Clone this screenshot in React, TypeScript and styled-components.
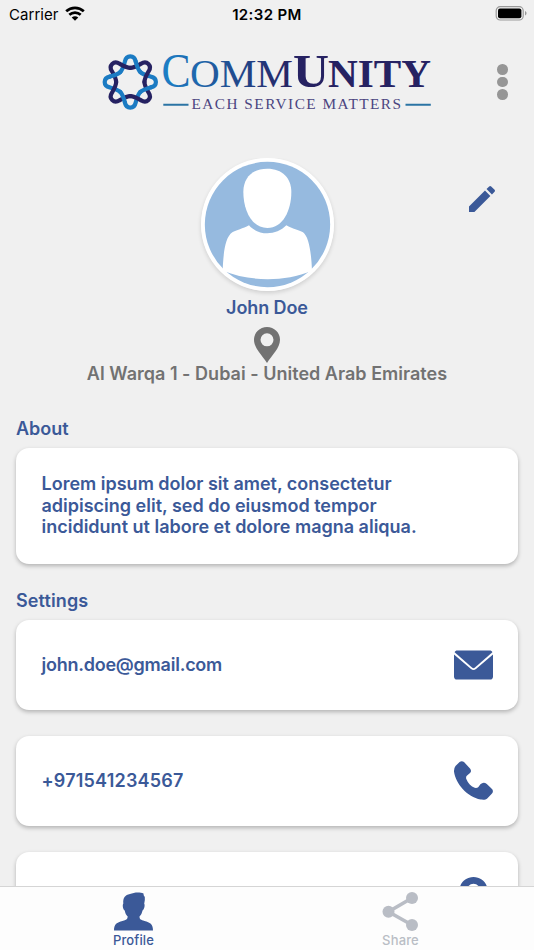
import React from 'react';
import styled, { createGlobalStyle } from 'styled-components';

const BLUE = '#3b5998';
const GREY = '#727272';

const GlobalStyle = createGlobalStyle`
  * { box-sizing: border-box; }
  body { margin: 0; background: #f0f0f0; font-family: Inter, "Liberation Sans", sans-serif; }
  svg { display: block; flex: none; overflow: visible; }
`;

const Screen = styled.div`
  display: flex;
  flex-direction: column;
  width: 534px;
  height: 950px;
  overflow: hidden;
  background: #f0f0f0;
`;

const StatusBar = styled.header`
  display: grid;
  grid-template-columns: 1fr auto 1fr;
  align-items: center;
  flex: none;
  height: 28px;
  padding: 0 7px 0 9px;
  color: #000;
  font-size: 15px;
`;
const Carrier = styled.div`
  display: flex;
  align-items: center;
  gap: 6px;
  letter-spacing: 0.05px;
`;
const Clock = styled.div`
  margin-right: 2px;
  font-weight: 600;
  letter-spacing: 0.38px;
`;
const Battery = styled.div`
  display: flex;
  justify-content: flex-end;
`;

const Brand = styled.div`
  display: flex;
  justify-content: space-between;
  flex: none;
  height: 130px;
  padding: 22px 26px 0 100px;
`;
const MenuButton = styled.button`
  display: flex;
  flex-direction: column;
  gap: 2px;
  height: 36px;
  margin-top: 14px;
  padding: 0;
  border: 0;
  background: none;
`;
const Dot = styled.span`
  width: 10.6px;
  height: 10.6px;
  border-radius: 50%;
  background: #969696;
`;

const Content = styled.main`
  flex: 1;
  min-height: 0;
  overflow: hidden;
`;
const ProfileHead = styled.section`
  display: grid;
  grid-template-columns: 1fr 133px 1fr;
  align-items: start;
`;
const Avatar = styled.div`
  grid-column: 2;
  height: 133px;
  border-radius: 50%;
  box-shadow: 0 2px 4px rgba(0, 0, 0, 0.14);
`;
const EditButton = styled.button`
  justify-self: end;
  margin: 28px 39px 0 0;
  padding: 0;
  border: 0;
  background: none;
`;
const Identity = styled.section`
  display: flex;
  flex-direction: column;
  align-items: center;
  padding-top: 5.500px;
`;
const Label = styled.div<{ $color?: string; $spacing?: number }>`
  color: ${p => p.$color ?? BLUE};
  font-size: 18px;
  font-weight: 600;
  line-height: 22px;
  letter-spacing: ${p => p.$spacing ?? 0}px;
  white-space: nowrap;
`;
const PinWrap = styled.div`
  margin: 8px 0 0;
`;
const Section = styled.section<{ $top: number }>`
  padding: ${p => p.$top}px 16px 0;
`;
const Card = styled.article<{ $height: number }>`
  display: flex;
  align-items: center;
  justify-content: space-between;
  height: ${p => p.$height}px;
  padding: 0 25px 0 25.5px;
  border-radius: 13px;
  background: #fff;
  box-shadow: 0 2px 4px rgba(0, 0, 0, 0.26);
`;
const Stack = styled.div`
  display: flex;
  flex-direction: column;
  gap: 26px;
  margin-top: 8px;
`;
const Paragraph = styled.p`
  margin: 0;
  color: ${BLUE};
  font-size: 18px;
  font-weight: 600;
  line-height: 21.5px;
`;
const Line = styled.span`
  display: block;
  white-space: nowrap;
`;

const TabBar = styled.nav`
  display: grid;
  grid-template-columns: 1fr 1fr;
  flex: none;
  height: 64px;
  border-top: 1px solid #d5d5d5;
  background: #fdfdfd;
`;
const Tab = styled.button<{ $active?: boolean }>`
  display: flex;
  flex-direction: column;
  align-items: center;
  gap: 1px;
  padding: 4.5px 0 0;
  border: 0;
  background: none;
  color: ${p => (p.$active ? BLUE : '#b9bdc5')};
  font: 500 13px/16px Inter, sans-serif;
  letter-spacing: 0.15px;
`;

const WifiIcon = () => (
  <svg width="20" height="15" viewBox="0 0 20 15">
    <g fill="none" stroke="#000" strokeWidth="2.700">
      <path d="M1.200 4.300C6.200-.4 13.800-.4 18.800 4.300" />
      <path d="M4.300 7.800c3.300-3 8.100-3 11.400 0" />
    </g>
    <path d="M6.700 10.500c2-1.700 4.600-1.700 6.600 0L10 13.800z" />
  </svg>
);

const BatteryIcon = () => (
  <svg width="32" height="15" viewBox="0 0 32 15">
    <rect x="1.200" y="-.3" width="27" height="13.300" rx="4" fill="none" stroke="#999" strokeWidth="1.200" />
    <rect x="3" y="1.500" width="23.400" height="9.700" rx="2" />
    <path d="M30 4.100c2 .8 2 3.700 0 4.500z" fill="#999" />
  </svg>
);

const LOBE_LEFT = 'M-10-10C-7.500-12.500-6.600-16-5.400-20.500C-4-27.300 4-27.300 5.400-20.500';
const LOBE_RIGHT = 'M5.400-20.500C6.600-16 7.500-12.500 10-10';

const Logo = () => (
  <svg width="334" height="64" viewBox="100 50 334 64" fontFamily='"Liberation Serif", serif'>
    <defs>
      <linearGradient id="word" gradientUnits="userSpaceOnUse" x1="163" y1="0" x2="292" y2="0">
        <stop offset="0" stopColor="#1c7fc6" />
        <stop offset="1" stopColor="#262262" />
      </linearGradient>
    </defs>
    <g transform="translate(130.300 82)" fill="none" strokeWidth="4.200" strokeLinecap="round">
      {[0, 90, 180, 270].map(a => (
        <path key={a} d={LOBE_LEFT} stroke="#1b7bc3" transform={`rotate(${a})`} />
      ))}
      {[45, 135, 225, 315].map(a => (
        <path key={a} d={`${LOBE_LEFT}${LOBE_RIGHT}`} stroke="#262262" transform={`rotate(${a})`} />
      ))}
      {[0, 90, 180, 270].map(a => (
        <path key={a} d={LOBE_RIGHT} stroke="#1b7bc3" transform={`rotate(${a})`} />
      ))}
    </g>
    <g fill="url(#word)">
      <text x="161.500" y="86.500" fontSize="48" textLength="29" lengthAdjust="spacingAndGlyphs">C</text>
      <text x="190" y="86.500" fontSize="41" textLength="103" lengthAdjust="spacingAndGlyphs">OMM</text>
    </g>
    <g fill="#262262" fontWeight="700">
      <text x="293" y="86.500" fontSize="47" textLength="36" lengthAdjust="spacingAndGlyphs">U</text>
      <text x="328" y="86.500" fontSize="40.500" textLength="103" lengthAdjust="spacingAndGlyphs">NITY</text>
    </g>
    <text x="191.500" y="109.300" fontSize="15.500" textLength="211" lengthAdjust="spacingAndGlyphs" letterSpacing="1.500" fill="#4a4480">EACH SERVICE MATTERS</text>
    <path d="M163.300 104.800H188.500M405.500 104.800H430.800" stroke="#2b74a4" strokeWidth="2" />
  </svg>
);

const Portrait = () => (
  <svg width="133" height="133" viewBox="32 24 399 399">
    <circle cx="231.500" cy="223.500" r="199.500" fill="#fff" />
    <circle cx="231.500" cy="223.500" r="188" fill="#96badf" />
    <path fill="#fff" d="M231 56C276 56 303 84 303 126C303 182 277 234 231 234S159 182 159 126C159 84 186 56 231 56Z" />
    <path fill="#fff" d="M97 362C99 310 104 262 126 247C138 240 158 236 176 226C203 258 258 258 288 226C306 237 326 240 338 247C356 260 363 310 365 362C280 396 185 396 97 362Z" />
  </svg>
);

const PencilIcon = () => (
  <svg width="26" height="26" viewBox="3 3 18 18" fill={BLUE}>
    <path d="M3 17.250V21h3.750L17.810 9.940l-3.750-3.750L3 17.250zM20.710 7.040c.39-.39.39-1.020 0-1.410l-2.340-2.340a.996.996 0 0 0-1.410 0l-1.830 1.830 3.750 3.750 1.830-1.830z" />
  </svg>
);

const PinIcon = ({ color, width, height }: { color: string; width: number; height: number }) => (
  <svg width={width} height={height} viewBox="0 0 26 36" fill={color}>
    <path fillRule="evenodd" d="M13 0C5.800 0 0 5.600 0 12.700C0 21 8 28 13 36C18 28 26 21 26 12.700C26 5.600 20.200 0 13 0ZM13 6.300a6.500 6.500 0 1 1 0 13a6.500 6.500 0 0 1 0-13Z" />
  </svg>
);

const MailIcon = () => (
  <svg width="39" height="30" viewBox="0 0 39 30" fill={BLUE}>
    <path d="M.6 2.200C1 1 2 .4 3.300 .4H35.700C37 .4 38 1 38.400 2.200L21 17.500Q19.500 18.800 18 17.500Z" />
    <path d="M0 4.500L17 19Q19.500 21 22 19L39 4.500V26.400Q39 29.500 36 29.500H3Q0 29.500 0 26.400Z" />
  </svg>
);

const PhoneIcon = () => (
  <svg width="39" height="39" viewBox="0 0 39 39" fill={BLUE}>
    <path d="M5.600 1Q7.700-.7 10 1L16 7.500Q18 10 16 12L12.800 14.800Q11.700 16 12.300 18C14 22.500 17 25.300 20.700 26.800Q23 27.300 24.400 26L26.400 23.300Q29.500 20.200 32.800 23L38 28Q39.800 30.200 38 32.500L33.500 37.200C31.800 38.800 29.500 38.800 26.700 38.500C13 36 1.500 22.500 0 10.500Q-.1 7 1.500 5Z" />
  </svg>
);

const PersonIcon = () => (
  <svg width="39" height="39" viewBox="0 0 39 39" fill="currentColor">
    <path d="M9.300 11.500C8.800 6 11 2.800 16 2C20 .2 26-.2 29.500 1.500Q29.200 3 30.800 5Q31.200 8 30.200 11.800C31.200 13 30.300 17.500 28.500 18.500C28 21 27 23 25.500 24.500C25.500 27.300 27 28 30.500 28.900C36 30.300 39 31.800 39 38.500H0C0 31.800 3 30.300 8.500 28.900C12 28 13.700 27.300 13.700 24.500C12 23 11.200 21 10.700 18.500C9 17.500 8.200 13 9.300 11.500Z" />
  </svg>
);

const ShareIcon = () => (
  <svg width="36" height="39" viewBox="0 0 36 39" fill="currentColor">
    <path d="M29 6L5.500 19.700L29 33" fill="none" stroke="currentColor" strokeWidth="3.600" />
    <circle cx="29" cy="6" r="6" />
    <circle cx="5.500" cy="19.700" r="6" />
    <circle cx="29" cy="33" r="6" />
  </svg>
);

export default function App() {
  return (
    <>
      <GlobalStyle />
      <Screen>
        <StatusBar>
          <Carrier>Carrier <WifiIcon /></Carrier>
          <Clock>12:32 PM</Clock>
          <Battery><BatteryIcon /></Battery>
        </StatusBar>
        <Brand>
          <Logo />
          <MenuButton aria-label="Menu"><Dot /><Dot /><Dot /></MenuButton>
        </Brand>
        <Content>
          <ProfileHead>
            <Avatar><Portrait /></Avatar>
            <EditButton aria-label="Edit profile"><PencilIcon /></EditButton>
          </ProfileHead>
          <Identity>
            <Label $spacing={-0.1}>John Doe</Label>
            <PinWrap><PinIcon color={GREY} width={26} height={36} /></PinWrap>
            <Label $color={GREY} $spacing={0.02}>Al Warqa 1 - Dubai - United Arab Emirates</Label>
          </Identity>
          <Section $top={33}>
            <Label>About</Label>
            <Stack>
              <Card $height={116}>
                <Paragraph>
                  <Line>Lorem ipsum dolor sit amet, consectetur</Line>
                  <Line>adipiscing elit, sed do eiusmod tempor</Line>
                  <Line>incididunt ut labore et dolore magna aliqua.</Line>
                </Paragraph>
              </Card>
            </Stack>
          </Section>
          <Section $top={26}>
            <Label $spacing={0.12}>Settings</Label>
            <Stack>
              <Card $height={90}><Label $spacing={-0.24}>john.doe@gmail.com</Label><MailIcon /></Card>
              <Card $height={90}><Label $spacing={0.2}>+971541234567</Label><PhoneIcon /></Card>
              <Card $height={90}><span /><PinIcon color={BLUE} width={39} height={39} /></Card>
            </Stack>
          </Section>
        </Content>
        <TabBar>
          <Tab $active><PersonIcon />Profile</Tab>
          <Tab><ShareIcon />Share</Tab>
        </TabBar>
      </Screen>
    </>
  );
}
